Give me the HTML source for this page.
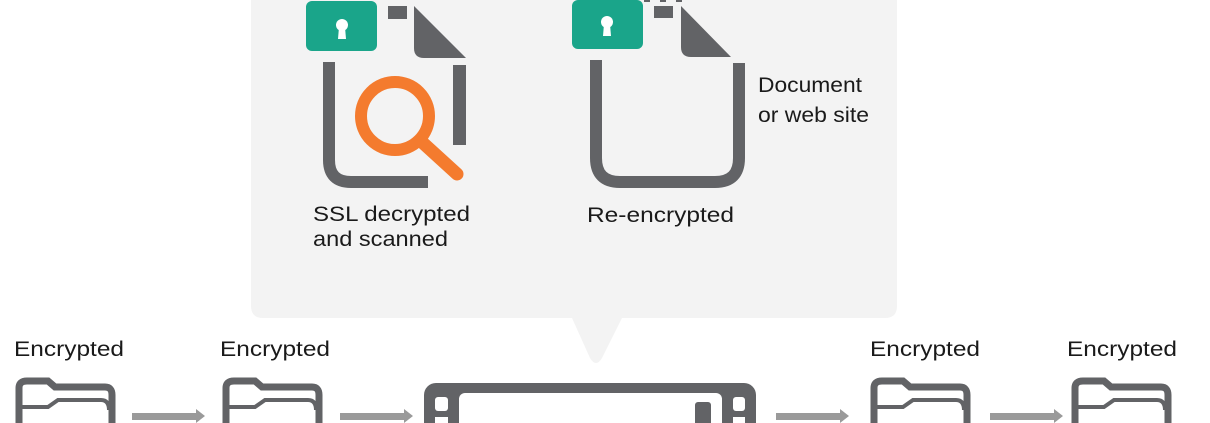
<!DOCTYPE html>
<html><head><meta charset="utf-8"><style>
html,body{margin:0;padding:0;background:#fff;width:1210px;height:423px;overflow:hidden}
svg{display:block}
text{font-family:"Liberation Sans",sans-serif;fill:#1a1a1a}
</style></head><body>
<svg width="1210" height="423" viewBox="0 0 1210 423">
<path d="M251,-10 H897 V306 Q897,318 885,318 H622 L602,358 Q596,368 590,358 L572,318 H263 Q251,318 251,306 Z" fill="#f3f3f3"/>
<!-- doc 1 -->
<g fill="#626366">
<rect x="388" y="6" width="19" height="13"/>
<path d="M414,6 L466,58 H424 Q414,58 414,48 Z"/>
<rect x="453" y="65" width="13" height="80"/>
</g>
<path d="M329,62 V160 Q329,182 351,182 H428" fill="none" stroke="#626366" stroke-width="12"/>
<rect x="306" y="1" width="71" height="50" rx="6" fill="#1aa58a"/>
<circle cx="342" cy="25" r="6" fill="#fff"/><path d="M339,27 h6 l1,12 h-8 z" fill="#fff"/>
<circle cx="395" cy="116" r="34" fill="none" stroke="#f47b2e" stroke-width="12"/>
<line x1="423" y1="143" x2="457" y2="174" stroke="#f47b2e" stroke-width="13" stroke-linecap="round"/>
<!-- doc 2 -->
<g fill="#626366">
<rect x="654" y="6" width="19" height="12"/>
<path d="M681,6 L731,57 H691 Q681,57 681,47 Z"/>
<rect x="644" y="0" width="6" height="2"/><rect x="660" y="0" width="6" height="2"/><rect x="676" y="0" width="6" height="2"/>
</g>
<path d="M596,60 V158 Q596,182 620,182 H715 Q739,182 739,158 V63" fill="none" stroke="#626366" stroke-width="12"/>
<rect x="572" y="0" width="71" height="49" rx="6" fill="#1aa58a"/>
<circle cx="607" cy="22" r="6" fill="#fff"/><path d="M604,24 h6 l1,12 h-8 z" fill="#fff"/>
<g font-size="21">
<text x="313" y="221" textLength="157" lengthAdjust="spacingAndGlyphs">SSL decrypted</text>
<text x="313" y="246" textLength="135" lengthAdjust="spacingAndGlyphs">and scanned</text>
<text x="587" y="222" textLength="147" lengthAdjust="spacingAndGlyphs">Re-encrypted</text>
<text x="758" y="92" textLength="104" lengthAdjust="spacingAndGlyphs">Document</text>
<text x="758" y="122" textLength="111" lengthAdjust="spacingAndGlyphs">or web site</text>
</g>
<!-- bottom -->
<g font-size="21">
<text x="14" y="356" textLength="110" lengthAdjust="spacingAndGlyphs">Encrypted</text>
<text x="220" y="356" textLength="110" lengthAdjust="spacingAndGlyphs">Encrypted</text>
<text x="870" y="356" textLength="110" lengthAdjust="spacingAndGlyphs">Encrypted</text>
<text x="1067" y="356" textLength="110" lengthAdjust="spacingAndGlyphs">Encrypted</text>
</g>
<g fill="none" stroke="#626366" stroke-width="7">
<path d="M19,430 V388 Q19,381 27,381 H48 L55,387 H105 Q112,387 112,395 V423"/>
<path d="M19,407 H48 L58,400 H101 Q109,400 109,410" stroke-width="4"/>
</g>
<g fill="none" stroke="#626366" stroke-width="7" transform="translate(207,0)">
<path d="M19,430 V388 Q19,381 27,381 H48 L55,387 H105 Q112,387 112,395 V423"/>
<path d="M19,407 H48 L58,400 H101 Q109,400 109,410" stroke-width="4"/>
</g>
<g fill="none" stroke="#626366" stroke-width="7" transform="translate(855,0)">
<path d="M19,430 V388 Q19,381 27,381 H48 L55,387 H105 Q112,387 112,395 V423"/>
<path d="M19,407 H48 L58,400 H101 Q109,400 109,410" stroke-width="4"/>
</g>
<g fill="none" stroke="#626366" stroke-width="7" transform="translate(1056,0)">
<path d="M19,430 V388 Q19,381 27,381 H48 L55,387 H105 Q112,387 112,395 V423"/>
<path d="M19,407 H48 L58,400 H101 Q109,400 109,410" stroke-width="4"/>
</g>
<g fill="#9a9a9a">
<path d="M132,413 H196 V409 L205,416 L196,423 V420 H132 Z"/>
<path d="M340,413 H404 V409 L413,416 L404,423 V420 H340 Z"/>
<path d="M776,413 H840 V409 L849,416 L840,423 V420 H776 Z"/>
<path d="M990,413 H1054 V409 L1063,416 L1054,423 V420 H990 Z"/>
</g>
<!-- device -->
<rect x="424" y="383" width="332" height="60" rx="12" fill="#626366"/>
<rect x="459" y="393" width="263" height="40" rx="6" fill="#fff"/>
<rect x="435" y="397" width="13" height="14" rx="3" fill="#fff"/>
<rect x="435" y="417" width="13" height="10" fill="#fff"/>
<rect x="733" y="397" width="12" height="14" rx="3" fill="#fff"/>
<rect x="733" y="417" width="12" height="10" fill="#fff"/>
<rect x="695" y="402" width="16" height="25" rx="3" fill="#626366"/>
</svg>
</body></html>
